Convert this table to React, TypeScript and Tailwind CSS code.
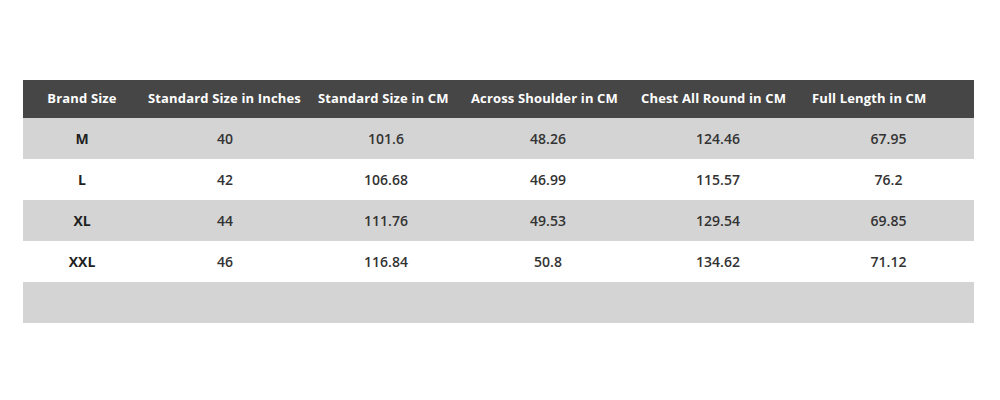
const columns = [
  { label: "Brand Size", width: "w-[118px]", head: "justify-center" },
  { label: "Standard Size in Inches", width: "w-[168px]", head: "pl-[7px]" },
  { label: "Standard Size in CM", width: "w-[154px]", head: "pl-[9px]" },
  { label: "Across Shoulder in CM", width: "w-[170px]", head: "pl-[8px]" },
  { label: "Chest All Round in CM", width: "w-[170px]", head: "pl-[8px]" },
  { label: "Full Length in CM", width: "w-[171px]", head: "pl-[9px]" },
];

const rows = [
  ["M", "40", "101.6", "48.26", "124.46", "67.95"],
  ["L", "42", "106.68", "46.99", "115.57", "76.2"],
  ["XL", "44", "111.76", "49.53", "129.54", "69.85"],
  ["XXL", "46", "116.84", "50.8", "134.62", "71.12"],
  ["", "", "", "", "", ""],
];

export default function App() {
  return (
    <div
      className="h-[400px] w-[1000px] bg-white pl-[23px] pt-[80px]"
      style={{ fontFamily: '"Open Sans", "Liberation Sans", sans-serif' }}
    >
      <div className="w-[951px]">
        <div className="flex h-[38px] bg-[#464646] text-[13px] font-bold tracking-[0.15px] text-white">
          {columns.map((c) => (
            <div key={c.label} className={`flex items-center whitespace-nowrap ${c.width} ${c.head}`}>
              {c.label}
            </div>
          ))}
        </div>
        {rows.map((r, i) => (
          <div
            key={i}
            className={`flex h-[41px] text-[14px] font-semibold text-[#333] ${i % 2 === 0 ? "bg-[#d4d4d4]" : "bg-white"}`}
          >
            {r.map((v, j) => (
              <div
                key={j}
                className={`flex items-center justify-center ${columns[j].width} ${j === 0 ? "font-bold text-[#1f1f1f]" : ""}`}
              >
                {v}
              </div>
            ))}
          </div>
        ))}
      </div>
    </div>
  );
}
